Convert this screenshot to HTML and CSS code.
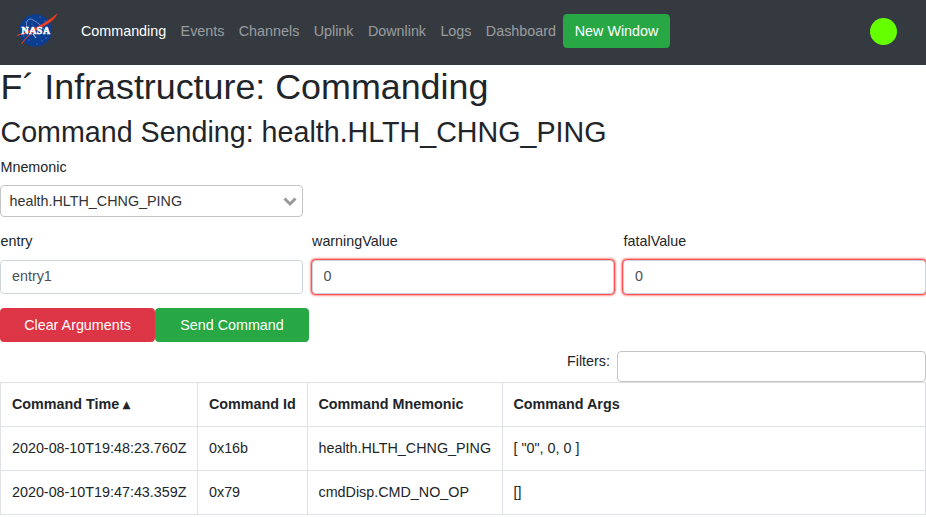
FILE: index.html
```html
<!DOCTYPE html>
<html lang="en">
<head>
<meta charset="utf-8">
<title>F´ Infrastructure: Commanding</title>
<link rel="stylesheet" href="styles.css">
</head>
<body>
<nav class="navbar">
  <a class="brand" href="#" aria-label="NASA">
    <svg width="42" height="36" viewBox="0 0 42 36">
      <circle cx="18.5" cy="17.5" r="16.3" fill="#0b3d91"/>
      <g fill="#d5def0">
        <circle cx="9" cy="9" r=".45"/><circle cx="23" cy="4" r=".45"/><circle cx="28" cy="8" r=".45"/>
        <circle cx="15" cy="11" r=".45"/><circle cx="12" cy="27" r=".45"/><circle cx="25" cy="28" r=".45"/>
        <circle cx="29" cy="25" r=".45"/><circle cx="20" cy="31" r=".45"/><circle cx="7" cy="23" r=".45"/>
      </g>
      <path d="M10 15C8 8 12 4 16 7C22 10 27 15 29 21" fill="none" stroke="#8ba5d2" stroke-width=".8"/>
      <path d="M0 22.500C13 18 27 12 40 1C36 9 28 12 20 16.500C13 21 8 26 4.500 31C9 24 14 20 20 16.500C13 19 6 21 0 22.500Z" fill="#fc3d21" stroke="#fc3d21" stroke-width=".6"/>
      <text class="logo-text" x="4.500" y="20.700" textLength="28.500" lengthAdjust="spacing">NASA</text>
      <path d="M16 21L19 25" stroke="#fff" stroke-width=".8"/>
    </svg>
  </a>
  <div class="nav-links">
    <a class="nav-link active" href="#">Commanding</a>
    <a class="nav-link" href="#">Events</a>
    <a class="nav-link" href="#">Channels</a>
    <a class="nav-link" href="#">Uplink</a>
    <a class="nav-link" href="#">Downlink</a>
    <a class="nav-link" href="#">Logs</a>
    <a class="nav-link" href="#">Dashboard</a>
    <a class="btn btn-success" href="#">New Window</a>
  </div>
  <span class="status"></span>
</nav>
<main>
  <h1>F´ Infrastructure: Commanding</h1>
  <h2>Command Sending: health.HLTH_CHNG_PING</h2>
  <div class="fields mnemonic">
    <div class="field">
      <label>Mnemonic</label>
      <div class="select">
        <span>health.HLTH_CHNG_PING</span>
        <svg width="14" height="10" viewBox="0 0 14 10"><path d="M1.500 1.500L7 7L12.500 1.500" fill="none" stroke="#999" stroke-width="3"/></svg>
      </div>
    </div>
  </div>
  <div class="fields arguments">
    <div class="field"><label for="entry">entry</label><input id="entry" class="control" value="entry1"></div>
    <div class="field"><label for="warning">warningValue</label><input id="warning" class="control invalid" value="0"></div>
    <div class="field"><label for="fatal">fatalValue</label><input id="fatal" class="control invalid" value="0"></div>
  </div>
  <div class="actions">
    <button class="btn btn-danger">Clear Arguments</button>
    <button class="btn btn-success">Send Command</button>
  </div>
  <div class="filters">
    <label for="filter">Filters:</label>
    <input id="filter" class="filter-input">
  </div>
  <table>
    <colgroup><col class="time"><col class="id"><col class="name"><col></colgroup>
    <thead><tr><th>Command Time <span class="sort">▴</span></th><th>Command Id</th><th>Command Mnemonic</th><th>Command Args</th></tr></thead>
    <tbody>
      <tr><td>2020-08-10T19:48:23.760Z</td><td>0x16b</td><td>health.HLTH_CHNG_PING</td><td>[ "0", 0, 0 ]</td></tr>
      <tr><td>2020-08-10T19:47:43.359Z</td><td>0x79</td><td>cmdDisp.CMD_NO_OP</td><td>[]</td></tr>
    </tbody>
  </table>
</main>
</body>
</html>
```
FILE: styles.css
```css
* { box-sizing: border-box; }
html { font-size: 14.33px; }
body {
  margin: 0;
  font-family: "Liberation Sans", Arial, sans-serif;
  font-size: 1rem;
  line-height: 21.6px;
  color: #212529;
  background: #fff;
  overflow: hidden;
}
.navbar {
  display: flex;
  align-items: center;
  height: 65px;
  padding: 0 29px 3px 17px;
  background: #343a40;
}
.brand { display: flex; width: 56.8px; }
.logo-text { font: bold 9.8px "Liberation Serif", serif; fill: #fff; stroke: #fff; stroke-width: .6px; }
.nav-links { display: flex; align-items: center; }
.nav-link {
  padding: 8px 7.2px 6.4px;
  color: rgba(255, 255, 255, .5);
  text-decoration: none;
}
.nav-link.active { color: #fff; }
.status {
  width: 27px;
  height: 27px;
  margin-left: auto;
  border-radius: 50%;
  background: #6f0;
}
.btn {
  height: 34px;
  padding: 6px 10.6px 4px;
  border: 1px solid;
  border-radius: 3.6px;
  font: inherit;
  color: #fff;
  text-align: center;
  text-decoration: none;
  white-space: nowrap;
}
.btn-success { background: #28a745; border-color: #28a745; }
.btn-danger { background: #dc3545; border-color: #dc3545; }
h1, h2 { margin: 0; font-weight: 500; }
h1 { height: 50px; padding-left: .5px; font-size: 35.85px; line-height: 45.2px; }
h2 { height: 42px; padding-left: .5px; font-size: 28.65px; line-height: 34.6px; }
.fields {
  display: grid;
  grid-template-columns: repeat(3, 1fr);
  column-gap: 8.6px;
}
.mnemonic { height: 74px; }
.arguments { height: 77px; }
.field label { display: block; height: 28px; padding-left: .5px; }
.arguments .field label { height: 29px; }
.select {
  display: flex;
  align-items: center;
  justify-content: space-between;
  height: 32px;
  padding: 1px 5px 0 8.5px;
  border: 1px solid #c4c4c4;
  border-radius: 4px;
  color: #333;
}
.control {
  display: block;
  width: 100%;
  height: 34px;
  padding: 4px 11px 6px;
  border: 1px solid #ced4da;
  border-radius: 3.6px;
  font: inherit;
  color: #495057;
}
.invalid { box-shadow: 0 0 2.5px 1px #f00; }
.actions { display: flex; height: 43px; }
.actions .btn-danger { width: 155px; }
.actions .btn-success { width: 154px; }
.filters { display: flex; justify-content: flex-end; height: 31px; }
.filters label { margin-right: 7px; }
.filter-input { width: 309px; height: 31px; border: 1px solid #c4c4c4; border-radius: 4px; }
table { width: 100%; table-layout: fixed; border-collapse: collapse; }
.time { width: 197px; }
.id { width: 110px; }
.name { width: 195px; }
th, td {
  height: 44px;
  padding: 0 11px;
  border: 1px solid #dee2e6;
  text-align: left;
  white-space: nowrap;
}
th:nth-child(n+3), td:nth-child(n+3) { padding-left: 10.5px; }
.sort { margin-left: 0; }
```
